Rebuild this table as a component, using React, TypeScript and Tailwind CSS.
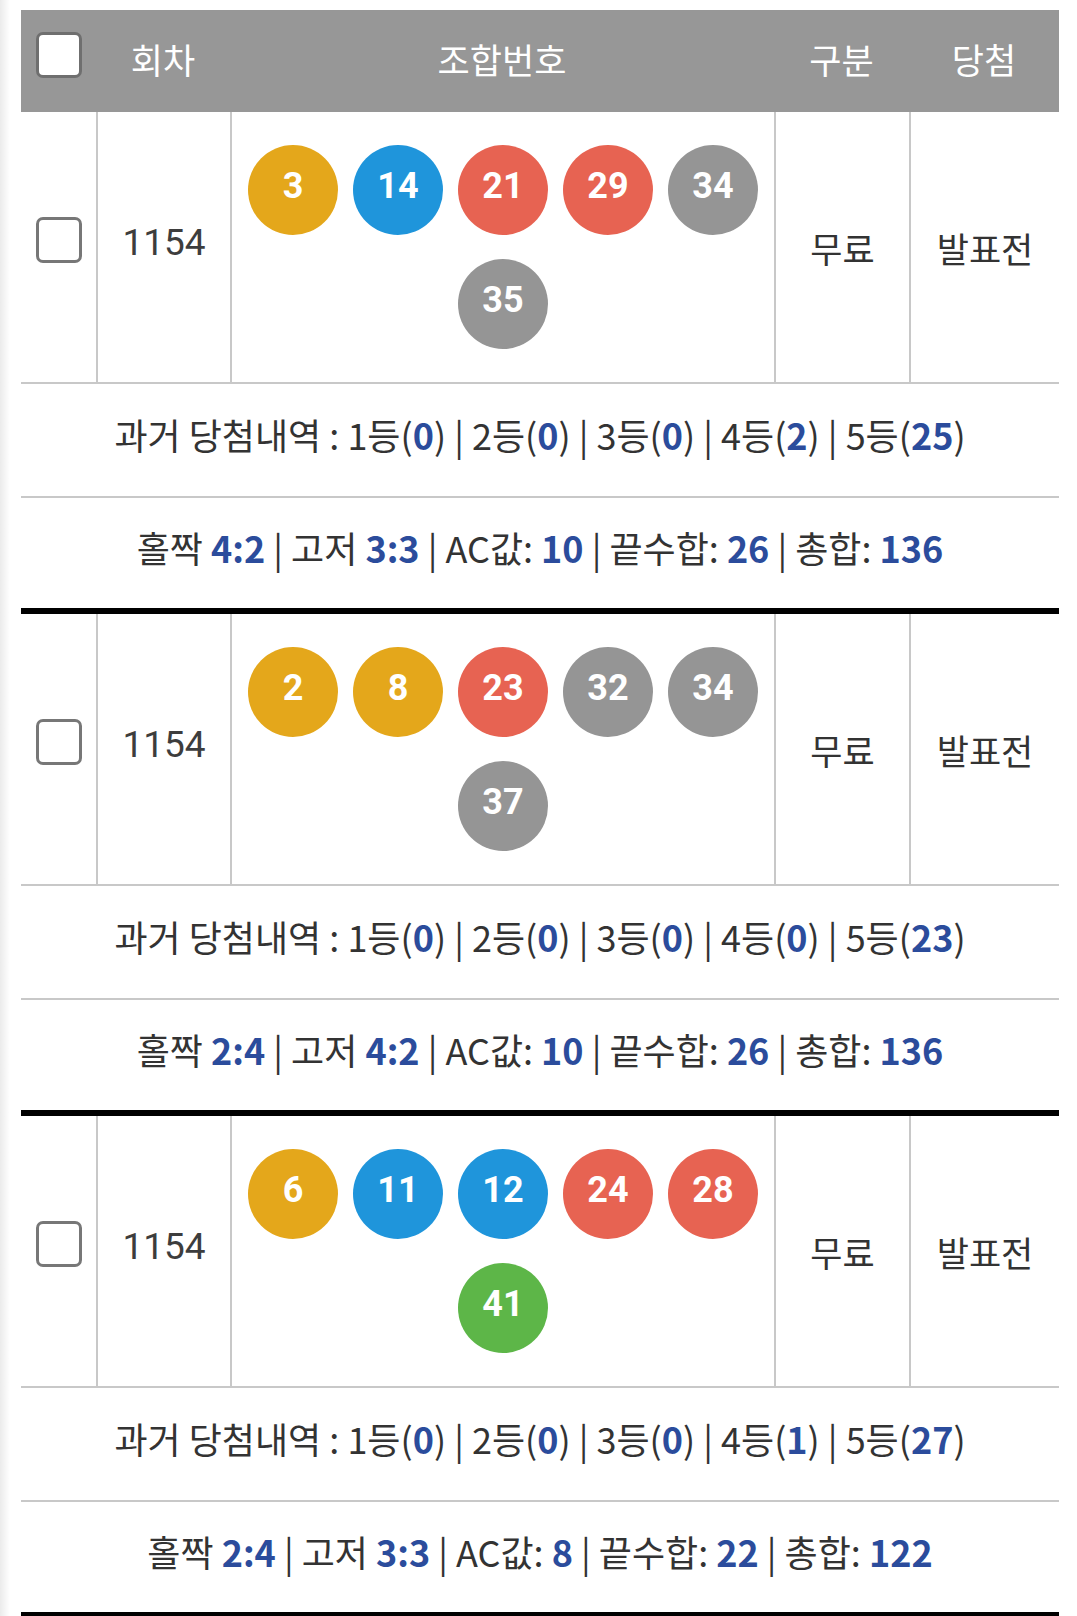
const KR = "font-['Noto_Sans_CJK_KR','Noto_Sans',sans-serif]";

type Row = {
  balls: number[];
  past: number[];
  oddEven: string;
  highLow: string;
  ac: number;
  endSum: number;
  total: number;
};

const rows: Row[] = [
  { balls: [3, 14, 21, 29, 34, 35], past: [0, 0, 0, 2, 25], oddEven: "4:2", highLow: "3:3", ac: 10, endSum: 26, total: 136 },
  { balls: [2, 8, 23, 32, 34, 37], past: [0, 0, 0, 0, 23], oddEven: "2:4", highLow: "4:2", ac: 10, endSum: 26, total: 136 },
  { balls: [6, 11, 12, 24, 28, 41], past: [0, 0, 0, 1, 27], oddEven: "2:4", highLow: "3:3", ac: 8, endSum: 22, total: 122 },
];

function ballColor(n: number) {
  if (n <= 10) return "bg-[#e4a71b]";
  if (n <= 20) return "bg-[#1f95db]";
  if (n <= 30) return "bg-[#e76352]";
  if (n <= 40) return "bg-[#959595]";
  return "bg-[#5db648]";
}

function Ball({ n }: { n: number }) {
  return (
    <div
      className={`w-[90px] h-[90px] rounded-full flex items-center justify-center pb-[9px] text-white font-bold text-[36px] leading-none font-['Roboto',sans-serif] ${ballColor(n)}`}
    >
      {n}
    </div>
  );
}

function CheckBox({ header }: { header?: boolean }) {
  return (
    <div
      className={`w-[46px] h-[46px] rounded-[7px] border-[3px] bg-white ${header ? "border-[#6f6f6f] mb-[13px]" : "border-[#777777] mb-[14px]"}`}
    />
  );
}

function Val({ children }: { children: React.ReactNode }) {
  return <span className="font-bold text-[#2b4c9c]">{children}</span>;
}

function Block({ row }: { row: Row }) {
  return (
    <div>
      <div className="flex h-[272px] border-b-2 border-[#c8c8c8] text-[#333]">
        <div className="w-[75px] flex items-center justify-center">
          <CheckBox />
        </div>
        <div className="w-[134px] border-l-2 border-[#c8c8c8] flex items-center justify-center">
          <span className="text-[37px] leading-none text-[#3d3d3d] font-['Roboto',sans-serif] mb-[10px]">1154</span>
        </div>
        <div className="w-[544px] border-l-2 border-[#c8c8c8] flex flex-wrap justify-center content-center gap-x-[15px] gap-y-[24px] px-[12px]">
          {row.balls.map((b) => (
            <Ball key={b} n={b} />
          ))}
        </div>
        <div className={`w-[135px] border-l-2 border-[#c8c8c8] flex items-center justify-center text-[35px] leading-none ${KR}`}>
          무료
        </div>
        <div className={`w-[150px] border-l-2 border-[#c8c8c8] flex items-center justify-center text-[35px] leading-none ${KR}`}>
          발표전
        </div>
      </div>

      <div className={`h-[114px] pb-[12px] border-b-2 border-[#c8c8c8] flex items-center justify-center text-[36px] text-[#333] whitespace-pre ${KR}`}>
        <span>
          과거 당첨내역 :{" "}
          {row.past.map((p, i) => (
            <span key={i}>
              {i > 0 && " | "}
              {i + 1}등(<Val>{p}</Val>)
            </span>
          ))}
        </span>
      </div>

      <div className={`h-[110px] pb-[12px] flex items-center justify-center text-[36px] text-[#333] whitespace-pre ${KR}`}>
        <span>
          홀짝 <Val>{row.oddEven}</Val> | 고저 <Val>{row.highLow}</Val> | AC값: <Val>{row.ac}</Val> | 끝수합:{" "}
          <Val>{row.endSum}</Val> | 총합: <Val>{row.total}</Val>
        </span>
      </div>

      <div className="h-[6px] bg-black" />
    </div>
  );
}

export default function App() {
  return (
    <div className="min-h-screen bg-white flex">
      <div className="w-[10px] shrink-0 bg-gradient-to-r from-[#ebebeb] to-white" />
      <div className="ml-[11px] w-[1038px] pt-[10px]">
        <div className={`h-[102px] bg-[#979797] flex text-white text-[35px] leading-none ${KR}`}>
          <div className="w-[75px] flex items-center justify-center">
            <CheckBox header />
          </div>
          <div className="w-[134px] pb-[6px] flex items-center justify-center">회차</div>
          <div className="w-[544px] pb-[6px] flex items-center justify-center">조합번호</div>
          <div className="w-[135px] pb-[6px] flex items-center justify-center">구분</div>
          <div className="w-[150px] pb-[6px] flex items-center justify-center">당첨</div>
        </div>
        {rows.map((r, i) => (
          <Block key={i} row={r} />
        ))}
      </div>
    </div>
  );
}
